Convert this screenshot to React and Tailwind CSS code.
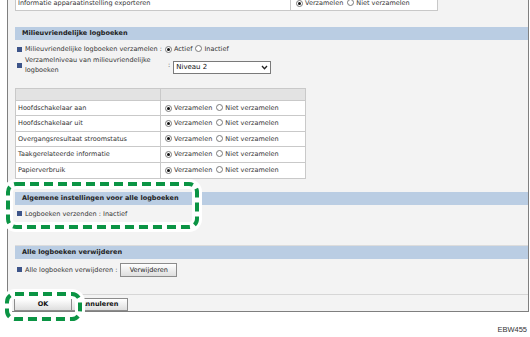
import React from "react";

const Radio = ({ checked }) => (
  <span className="inline-flex w-[7px] h-[7px] rounded-full border border-[#7a7a7a] bg-white items-center justify-center shrink-0">
    {checked && <span className="w-[3px] h-[3px] rounded-full bg-[#111]" />}
  </span>
);

const RadioPair = ({ a = "Verzamelen", b = "Niet verzamelen" }) => (
  <div className="flex items-center">
    <Radio checked />
    <span className="ml-[2px]">{a}</span>
    <span className="ml-[4px]"><Radio /></span>
    <span className="ml-[2px]">{b}</span>
  </div>
);

const Bullet = () => <span className="w-[5px] h-[5px] bg-[#3d5489] shrink-0" />;

const Bar = ({ children, className = "" }) => (
  <div className={"h-[13px] bg-[#bacde3] pl-[7px] flex items-center font-bold text-[#222] " + className}>
    {children}
  </div>
);

const rows = [
  "Hoofdschakelaar aan",
  "Hoofdschakelaar uit",
  "Overgangsresultaat stroomstatus",
  "Taakgerelateerde informatie",
  "Papierverbruik",
];

const Btn = ({ children, className = "" }) => (
  <div
    className={
      "h-[13px] border border-[#8c8c8c] bg-gradient-to-b from-white to-[#dedede] flex items-center justify-center " +
      className
    }
  >
    {children}
  </div>
);

export default function App() {
  return (
    <div
      className="relative w-[530px] h-[337px] bg-white overflow-hidden text-[6.5px] text-[#333] leading-none"
      style={{ fontFamily: '"DejaVu Sans", Verdana, sans-serif' }}
    >
      <div className="ml-[7px] w-[522px] h-[312px] border-x border-b border-[#7f7f7f] bg-[#f3f3f3] flex flex-col">
        <div className="pl-[7px] flex flex-col">
          {/* top row */}
          <div className="-mt-[4px] w-[423px] h-[15px] bg-white border border-[#c8c8c8] flex">
            <div className="w-[275px] border-r border-[#c8c8c8] pl-[2px] flex items-center">
              Informatie apparaatinstelling exporteren
            </div>
            <div className="pl-[5px] flex items-center">
              <RadioPair />
            </div>
          </div>

          <Bar className="mt-[16px]">Milieuvriendelijke logboeken</Bar>

          <div className="mt-[4px] h-[10px] pl-[2px] flex items-center">
            <Bullet />
            <span className="ml-[3px]">Milieuvriendelijke logboeken verzamelen :</span>
            <span className="ml-[3px] flex items-center">
              <Radio checked />
              <span className="ml-[2px]">Actief</span>
              <span className="ml-[3px]"><Radio /></span>
              <span className="ml-[2px]">Inactief</span>
            </span>
          </div>

          <div className="mt-[2px] pl-[2px] flex items-center">
            <Bullet />
            <div className="ml-[3px] w-[143px] leading-[9.5px]">
              Verzamelniveau van milieuvriendelijke
              <br />
              logboeken
            </div>
            <span>:</span>
            <div className="ml-[3px] mt-[3px] w-[98px] h-[13px] bg-white border border-[#7a7a7a] flex items-center justify-between pl-[2px] pr-[2px] text-[7px] text-[#111]">
              <span>Niveau 2</span>
              <svg width="7" height="5" viewBox="0 0 7 5">
                <path d="M1 1 L3.5 3.8 L6 1" stroke="#222" strokeWidth="1.3" fill="none" />
              </svg>
            </div>
          </div>

          {/* table */}
          <div className="mt-[13px] w-[291px] border border-[#c9c9c9] flex flex-col">
            <div className="h-[12px] bg-[#e3e3e3] flex border-b border-[#c9c9c9]">
              <div className="w-[145px] border-r border-[#c9c9c9]" />
              <div className="flex-1" />
            </div>
            {rows.map((r, i) => (
              <div
                key={r}
                className={
                  "h-[15.4px] bg-white flex " + (i < rows.length - 1 ? "border-b border-[#c9c9c9]" : "")
                }
              >
                <div className="w-[145px] border-r border-[#c9c9c9] pl-[2px] flex items-center">{r}</div>
                <div className="pl-[4px] flex items-center">
                  <RadioPair />
                </div>
              </div>
            ))}
          </div>

          <Bar className="mt-[13px]">Algemene instellingen voor alle logboeken</Bar>

          <div className="mt-[4px] h-[10px] pl-[2px] flex items-center">
            <Bullet />
            <span className="ml-[3px]">Logboeken verzenden : Inactief</span>
          </div>

          <div className="mt-[26px] border-t border-[#dcdcdc]">
            <Bar>Alle logboeken verwijderen</Bar>
          </div>

          <div className="mt-[4px] h-[14px] pl-[2px] flex items-center">
            <Bullet />
            <span className="ml-[3px]">Alle logboeken verwijderen :</span>
            <Btn className="ml-[3px] w-[57px] h-[14px] text-[#222]">Verwijderen</Btn>
          </div>
        </div>

        <div className="mt-[17px] border-t border-[#d6d6d6] pl-[6px] pt-[3px] flex">
          <Btn className="w-[58px] font-bold text-[#111]">OK</Btn>
          <Btn className="w-[56px] font-bold text-[#111] border-l-0">Annuleren</Btn>
        </div>
      </div>

      <div
        className="mt-[14px] pr-[3px] text-right text-[7.5px] text-[#333]"
        style={{ fontFamily: '"Liberation Sans", Arial, sans-serif' }}
      >
        EBW455
      </div>

      {/* highlight overlays */}
      <svg className="absolute left-0 top-0 pointer-events-none" width="530" height="337">
        <rect x="8" y="184" width="189" height="43" rx="8" fill="none" stroke="#fff" strokeWidth="10" />
        <rect x="8" y="184" width="189" height="43" rx="8" fill="none" stroke="#0b9444" strokeWidth="4" strokeDasharray="9 5" />
        <rect x="7" y="294" width="73" height="25" rx="8" fill="none" stroke="#fff" strokeWidth="10" />
        <rect x="7" y="294" width="73" height="25" rx="8" fill="none" stroke="#0b9444" strokeWidth="4" strokeDasharray="9 5" />
      </svg>
    </div>
  );
}
